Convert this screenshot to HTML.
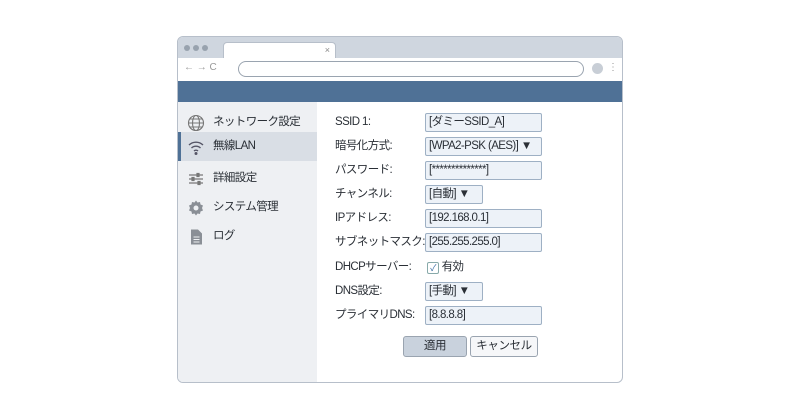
<!DOCTYPE html><html><head><meta charset="utf-8"><style>
body{margin:0;width:800px;height:419px;background:#fff;font-family:"Liberation Sans","Noto Sans CJK JP",sans-serif;color:#2a2f36;position:relative;overflow:hidden}
.win{position:absolute;left:177px;top:36px;width:444px;height:345px;border:1px solid #b7bfca;border-radius:6px;overflow:hidden;background:#fff}
.title{position:absolute;left:0;top:0;width:100%;height:21px;background:#cfd6df}
.dot{position:absolute;top:8px;width:6px;height:6px;border-radius:50%;background:#98a2ae}
.tab{position:absolute;left:45px;top:5px;width:111px;height:17px;background:#fff;border:1px solid #b7bfca;border-bottom:none;border-radius:4px 4px 0 0;font-size:9px;color:#888}
.addr{position:absolute;left:0;top:21px;width:100%;height:23px;background:#fff;border-bottom:1px solid #c8cfd8}
.url{position:absolute;left:60px;top:3px;width:344px;height:14px;border:1px solid #9aa4b0;border-radius:8px}
.blue{position:absolute;left:0;top:44px;width:100%;height:21px;background:#4f7196}
.side{position:absolute;left:0;top:65px;width:139px;height:280px;background:#eef0f3}
.si{position:absolute;left:0;width:139px;height:29px;font-size:11.5px;letter-spacing:-0.6px;line-height:29px}
.si span{position:absolute;left:35px}
.si svg{position:absolute;left:9px;top:6px}
.act{background:#d9dee5;border-left:3px solid #4f7196;width:136px}
.lab{position:absolute;left:157px;font-size:11.5px;letter-spacing:-0.6px;line-height:19px;white-space:nowrap}
.inp{position:absolute;left:247px;height:17px;border:1px solid #9eb0c4;background:#edf2f8;border-radius:2px;font-size:11.5px;letter-spacing:-0.6px;line-height:17px;padding-left:3px;box-sizing:content-box;white-space:nowrap;overflow:hidden}
.btn{position:absolute;top:299px;height:19px;border:1px solid #9aa4b0;border-radius:3px;font-size:11.5px;letter-spacing:-0.4px;line-height:19px;text-align:center}
</style></head><body>
<div class="win">
<div class="title"><div class="dot" style="left:6px"></div><div class="dot" style="left:15px"></div><div class="dot" style="left:24px"></div>
<div class="tab"><span style="position:absolute;right:5px;top:2px">×</span></div></div>
<div class="addr"><span style="position:absolute;left:6px;top:4px;font-size:10px;color:#999">← → C</span><div class="url"></div>
<div style="position:absolute;left:414px;top:5px;width:11px;height:11px;border-radius:50%;background:#c8ced6"></div><span style="position:absolute;left:430px;top:4px;font-size:10px;color:#999">⋮</span></div>
<div class="blue"></div>
<div class="side">
<div class="si" style="top:6px"><svg width="18" height="18" viewBox="0 0 18 18" fill="none" stroke="#777" stroke-width="1.1"><circle cx="9" cy="9" r="7.5"/><ellipse cx="9" cy="9" rx="3.5" ry="7.5"/><path d="M1.5 9h15M3 5h12M3 13h12"/></svg><span>ネットワーク設定</span></div>
<div class="si act" style="top:30px;left:0"><svg width="18" height="18" viewBox="0 0 18 18" fill="none" stroke="#556" stroke-width="1.4" style="left:6px"><path d="M2 7a10 10 0 0 1 14 0M4.5 10a6.5 6.5 0 0 1 9 0M7 13a3 3 0 0 1 4 0"/><circle cx="9" cy="15.5" r=".8" fill="#556"/></svg><span style="left:32px">無線LAN</span></div>
<div class="si" style="top:62px"><svg width="18" height="18" viewBox="0 0 18 18" fill="none" stroke="#777" stroke-width="1.2"><path d="M2 5h14M2 9h14M2 13h14"/><rect x="10" y="3.5" width="2" height="3" fill="#777"/><rect x="5" y="7.5" width="2" height="3" fill="#777"/><rect x="11" y="11.5" width="2" height="3" fill="#777"/></svg><span>詳細設定</span></div>
<div class="si" style="top:91px"><svg width="18" height="18" viewBox="0 0 18 18"><path d="M9 1.5l1.5 2 2.5-.5.5 2.5 2.5 1-1 2.5 1 2.5-2.5 1-.5 2.5-2.5-.5L9 16.5l-1.5-2-2.5.5-.5-2.5L2 11.5l1-2.5-1-2.5 2.5-1L5 3l2.5.5z" fill="#8a8f96"/><circle cx="9" cy="9" r="2.5" fill="#eef0f3"/></svg><span>システム管理</span></div>
<div class="si" style="top:120px"><svg width="18" height="18" viewBox="0 0 18 18"><path d="M4 1.5h7l4 4v11H4z" fill="#8a8f96"/><path d="M6.5 9h6M6.5 11.5h6M6.5 14h6" stroke="#eef0f3" stroke-width="1"/></svg><span>ログ</span></div>
</div>
<div class="lab" style="top:76px">SSID 1:</div><div class="inp" style="top:76px;width:112px">[ダミーSSID_A]</div>
<div class="lab" style="top:100px">暗号化方式:</div><div class="inp" style="top:100px;width:112px">[WPA2-PSK (AES)] ▼</div>
<div class="lab" style="top:124px">パスワード:</div><div class="inp" style="top:124px;width:112px">[**************]</div>
<div class="lab" style="top:148px">チャンネル:</div><div class="inp" style="top:148px;width:53px">[自動] ▼</div>
<div class="lab" style="top:172px">IPアドレス:</div><div class="inp" style="top:172px;width:112px">[192.168.0.1]</div>
<div class="lab" style="top:196px">サブネットマスク:</div><div class="inp" style="top:196px;width:112px">[255.255.255.0]</div>
<div class="lab" style="top:221px">DHCPサーバー:</div><div class="lab" style="top:221px;left:249px"><span style="display:inline-block;width:10px;height:10px;border:1px solid #8aa;border-radius:2px;font-size:9px;line-height:10px;text-align:center;color:#3a6ea5;vertical-align:-1px">✓</span> 有効</div>
<div class="lab" style="top:245px">DNS設定:</div><div class="inp" style="top:245px;width:53px">[手動] ▼</div>
<div class="lab" style="top:269px">プライマリDNS:</div><div class="inp" style="top:269px;width:112px">[8.8.8.8]</div>
<div class="btn" style="left:225px;width:62px;background:#c9d2dd">適用</div>
<div class="btn" style="left:292px;width:66px;background:#f6f7f9">キャンセル</div>
</div>
</body></html>
